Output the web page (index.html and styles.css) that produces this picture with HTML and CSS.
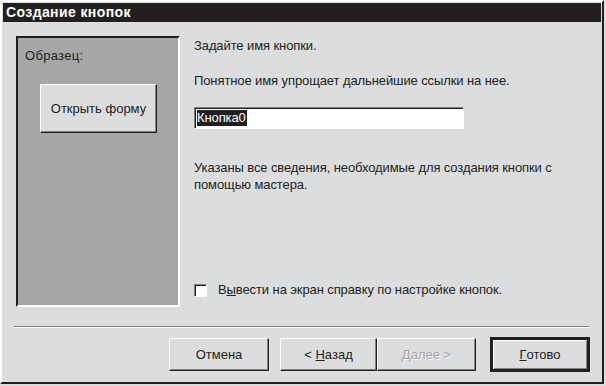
FILE: index.html
```html
<!DOCTYPE html>
<html>
    <head>
        <title>Создание кнопок</title>
        <link rel="stylesheet" href="styles.css">
    </head>
    <body>
        <div class="window">
            <div class="caption">Создание кнопок</div>
            <div class="main">
                <div class="sample">
                    <div class="sample-label">Образец:</div>
                    <div class="sample-button">Открыть форму</div>
                </div>
                <div class="content">
                    <p class="line first">Задайте имя кнопки.</p>
                    <p class="line second">Понятное имя упрощает дальнейшие ссылки на нее.</p>
                    <div class="field"><span class="selected">Кнопка0</span></div>
                    <p class="info">Указаны все сведения, необходимые для создания кнопки с<br>помощью мастера.</p>
                    <label class="check">
                        <span class="box"></span>
                        <span>В<u>ы</u>вести на экран справку по настройке кнопок.</span>
                    </label>
                </div>
            </div>
            <div class="divider"></div>
            <div class="buttons">
                <div class="button cancel">Отмена</div>
                <div class="button back">&lt;&nbsp;<u>Н</u>азад</div>
                <div class="button next disabled"><u>Д</u>алее&nbsp;&gt;</div>
                <div class="button finish"><u>Г</u>отово</div>
            </div>
        </div>
    </body>
</html>
```
FILE: styles.css
```css
body {
    margin: 0;
    background: #dcdddf;
    font-family: "Liberation Sans", Arial, sans-serif;
    font-size: 13px;
    color: #231f20;
}

.window {
    width: 604px;
    height: 384px;
    box-sizing: border-box;
    border: 2px solid;
    border-color: #ffffff #231f20 #231f20 #ffffff;
    padding: 1px;
    background: #dcdddf;
    display: flex;
    flex-direction: column;
}

.caption {
    height: 19px;
    line-height: 19px;
    background: #231f20;
    color: #ffffff;
    font-weight: bold;
    font-size: 14px;
    letter-spacing: 0.4px;
    padding-left: 3px;
}

.main {
    display: flex;
    margin-top: 14px;
    padding-left: 13px;
}

.sample {
    width: 164px;
    height: 271px;
    box-sizing: border-box;
    border: 2px solid;
    border-color: #231f20 #ffffff #ffffff #231f20;
    background: #a6a7a9;
    padding: 10px 0 0 7px;
}

.sample-label {
    line-height: 16px;
    letter-spacing: 0.3px;
}

.sample-button {
    width: 117px;
    height: 49px;
    box-sizing: border-box;
    margin: 20px 0 0 15px;
    background: #dcdddf;
    border: 1px solid;
    border-color: #ffffff #231f20 #231f20 #ffffff;
    box-shadow: inset -1px -1px 0 #808080;
    display: flex;
    align-items: center;
    justify-content: center;
}

.content {
    margin-left: 14px;
    display: flex;
    flex-direction: column;
    width: 395px;
    letter-spacing: -0.1px;
}

.line {
    margin: 0;
    line-height: 16px;
}

.first {
    margin-top: 2px;
}

.second {
    margin-top: 19px;
}

.field {
    margin-top: 18px;
    width: 270px;
    height: 22px;
    box-sizing: border-box;
    background: #ffffff;
    border: 1px solid;
    border-color: #808080 #ffffff #ffffff #808080;
    box-shadow: inset 1px 1px 0 #231f20;
    padding: 2px 0 0 1px;
}

.selected {
    display: inline-block;
    background: #231f20;
    color: #ffffff;
    line-height: 16px;
    padding-right: 1px;
    border-left: 1px solid #ffffff;
}

.info {
    margin: 30px 0 0 0;
    line-height: 17px;
}

.check {
    margin-top: 89px;
    display: flex;
    align-items: center;
    line-height: 16px;
}

.box {
    width: 13px;
    height: 13px;
    box-sizing: border-box;
    background: #ffffff;
    border: 1px solid;
    border-color: #808080 #ffffff #ffffff #808080;
    box-shadow: inset 1px 1px 0 #231f20;
    margin-right: 11px;
}

.divider {
    margin: 19px 12px 0 11px;
    height: 1px;
    background: #808080;
    border-bottom: 1px solid #ffffff;
}

.buttons {
    display: flex;
    margin-top: 10px;
    padding-left: 166px;
}

.button {
    height: 33px;
    box-sizing: border-box;
    border: 1px solid;
    border-color: #ffffff #231f20 #231f20 #ffffff;
    box-shadow: inset -1px -1px 0 #808080;
    display: flex;
    align-items: center;
    justify-content: center;
}

.cancel {
    width: 100px;
    margin-right: 11px;
}

.back {
    width: 97px;
}

.next {
    width: 99px;
    margin-right: 15px;
}

.disabled {
    color: #a0a1a3;
    text-shadow: 1px 1px 0 #ffffff;
}

.finish {
    width: 98px;
    outline: 1px solid #231f20;
    outline-offset: 0;
    border-width: 2px;
    border-color: #231f20;
    box-shadow: inset 1px 1px 0 #ffffff, inset -1px -1px 0 #808080;
}
```
